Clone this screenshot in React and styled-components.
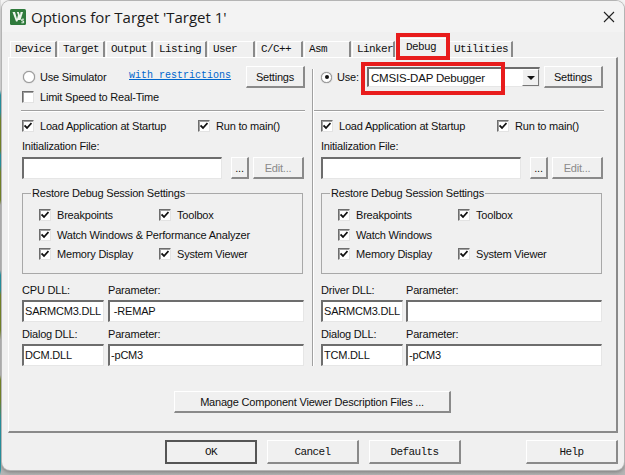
import styled, { createGlobalStyle } from 'styled-components';

const GlobalStyle = createGlobalStyle`
  html, body {
    margin: 0;
    padding: 0;
    overflow: hidden;
  }
  body {
    font-family: "Liberation Sans", Arial, sans-serif;
  }
`

const Page = styled.div`
  width: 625px;
  height: 475px;
  box-sizing: border-box;
  padding: 1px 1px 5px 2px;
  background:
    linear-gradient(to bottom,
      #ddd 0, #ddd 90px, #2a9aa8 95px, #2a9aa8 112px, #7c8c2c 120px, #7c8c2c 150px,
      #2a9aa8 155px, #2a9aa8 165px, #7c8c2c 172px, #7c8c2c 200px, #bbb 205px, #bbb 270px,
      #2a9aa8 275px, #2a9aa8 290px, #7c8c2c 295px, #7c8c2c 330px, #bbb 340px, #bbb 375px,
      #7c8c2c 380px, #7c8c2c 400px, #2a9aa8 420px, #2a9aa8 470px, #bbb 475px) left top / 1px 100% no-repeat,
    linear-gradient(to bottom, #f4f4f4 0, #e6e6e6 300px, #b5b5b5 100%);
`

const Window = styled.div`
  width: 622px;
  height: 469px;
  display: flex;
  flex-direction: column;
  background: #f0f0f0;
  border-radius: 8px;
  box-shadow: 0 0 0 1px #b4b4b4, 0 2px 4px rgba(0, 0, 0, 0.35);
  overflow: hidden;
`

const TitleBar = styled.div`
  height: 31px;
  flex: none;
  display: flex;
  align-items: center;
  padding: 0 9px 0 8px;
  background: #f3f3f3;
`

const AppIcon = styled.svg`
  width: 16px;
  height: 16px;
  flex: none;
`

const Title = styled.div`
  margin-left: 5px;
  flex: 1;
  font-family: "Open Sans", "Noto Sans", sans-serif;
  font-size: 15px;
  color: #1a1a1a;
  white-space: nowrap;
`

const Content = styled.div`
  flex: 1;
  display: flex;
  flex-direction: column;
  padding: 9px 6px 0;
`

const TabRow = styled.div`
  height: 16px;
  flex: none;
  display: flex;
  gap: 1px;
  margin-left: 2px;
  position: relative;
  z-index: 2;
`

const Tab = styled.div`
  position: relative;
  box-sizing: border-box;
  width: ${props => props.$w}px;
  height: ${props => (props.$active ? 20 : 16)}px;
  margin-top: ${props => (props.$active ? -3 : 0)}px;
  padding: ${props => (props.$active ? '2px 0 0 9px' : '1px 0 0 4px')};
  background: #f0f0f0;
  border-top: 1px solid #fff;
  border-left: 1px solid #fff;
  border-right: 2px solid #8a8a8a;
  font-family: "Liberation Mono", monospace;
  font-size: 11px;
  letter-spacing: -0.6px;
  line-height: 13px;
  color: #111;
  white-space: pre;
`

const RedBox = styled.div`
  position: absolute;
  box-sizing: border-box;
  left: ${props => props.$left}px;
  top: ${props => props.$top}px;
  width: ${props => props.$w}px;
  height: ${props => props.$h}px;
  border: 4px solid #e81c1c;
  pointer-events: none;
  z-index: 3;
`

const Panel = styled.div`
  box-sizing: border-box;
  width: 610px;
  height: 376px;
  flex: none;
  padding-top: 8px;
  border-top: 1px solid #fff;
  border-left: 1px solid #fff;
  border-right: 2px solid #8a8a8a;
  border-bottom: 2px solid #8a8a8a;
  display: flex;
  flex-direction: column;
`

const Panes = styled.div`
  display: grid;
  grid-template-columns: 303px 2px 1fr;
  height: 300px;
  flex: none;
`

const Pane = styled.div`
  display: flex;
  flex-direction: column;
  padding: ${props => (props.$right ? '0 0 0 7px' : '0 7px 0 13px')};
  font-size: 11px;
  letter-spacing: -0.2px;
  color: #111;
`

const Divider = styled.div`
  margin-top: 3px;
  border-left: 1px solid #a0a0a0;
  border-right: 1px solid #fff;
`

const TopRow = styled.div`
  height: 22px;
  display: flex;
  align-items: center;
  width: ${props => (props.$right ? 282 : 283)}px;
`

const Option = styled.label`
  display: flex;
  align-items: center;
  height: 14px;
  flex: none;
  width: ${props => (props.$w ? `${props.$w}px` : 'auto')};
  margin-top: ${props => props.$mt || 0}px;
  white-space: nowrap;
`

const RadioDot = styled.span`
  box-sizing: border-box;
  width: ${props => (props.$on ? 11 : 12)}px;
  height: ${props => (props.$on ? 11 : 12)}px;
  flex: none;
  margin: ${props => (props.$on ? '0 5px 0 0' : '0 5px 0 1px')};
  border-radius: 50%;
  border: 1px solid #9a9a9a;
  background: #fff;
  box-shadow: inset 0 0 0 1px #fff, 0 0 1px #777;
  display: flex;
  align-items: center;
  justify-content: center;
  &::after {
    content: '';
    width: 4px;
    height: 4px;
    border-radius: 50%;
    background: ${props => (props.$on ? '#111' : 'transparent')};
  }
`

const Box = styled.span`
  box-sizing: border-box;
  width: 12px;
  height: 12px;
  flex: none;
  margin-right: 6px;
  background: #fff;
  border-top: 1px solid #6d6d6d;
  border-left: 1px solid #6d6d6d;
  border-right: 1px solid #e3e3e3;
  border-bottom: 1px solid #e3e3e3;
  box-shadow: inset 1px 1px 0 #a0a0a0;
  display: flex;
  align-items: center;
  justify-content: center;
`

const LinkText = styled.a`
  flex: none;
  width: 117px;
  font-family: "Liberation Mono", monospace;
  font-size: 10px;
  letter-spacing: 0;
  color: #0066cc;
  text-decoration: underline;
  margin-top: -3px;
`

const Button = styled.button`
  box-sizing: border-box;
  flex: none;
  width: ${props => props.$w}px;
  height: ${props => props.$h || 22}px;
  padding: 0;
  margin-left: ${props => props.$ml || 0}px;
  background: #f0f0f0;
  border-top: 1px solid #fff;
  border-left: 1px solid #fff;
  border-right: 2px solid #8a8a8a;
  border-bottom: 2px solid #8a8a8a;
  font-family: "Liberation Sans", Arial, sans-serif;
  font-size: 11px;
  letter-spacing: -0.2px;
  color: ${props => (props.disabled ? '#8a8a8a' : '#111')};
`

const Separator = styled.div`
  height: 2px;
  margin-top: 6px;
  width: ${props => (props.$right ? 290 : 284)}px;
  margin-left: ${props => (props.$right ? -7 : -1)}px;
  background: linear-gradient(to bottom, #a0a0a0 50%, #fff 50%);
`

const CheckRow = styled.div`
  display: flex;
  margin-top: 7px;
`

const FieldLabel = styled.div`
  height: 14px;
  line-height: 14px;
  margin-top: ${props => props.$mt}px;
  white-space: nowrap;
`

const FileRow = styled.div`
  display: flex;
  height: 22px;
  margin-top: 4px;
`

const sunken = `
  box-sizing: border-box;
  background: #fff;
  border-top: 2px solid #6d6d6d;
  border-left: 2px solid #6d6d6d;
  border-right: 1px solid #e6e6e6;
  border-bottom: 1px solid #e6e6e6;
`

const TextInput = styled.input`
  ${sunken}
  width: ${props => (props.$w ? `${props.$w}px` : '100%')};
  height: 22px;
  min-width: 0;
  padding: 0 0 2px 1px;
  outline: none;
  flex: none;
  font-family: "Liberation Sans", Arial, sans-serif;
  font-size: 11px;
  letter-spacing: -0.2px;
  color: #111;
`

const Group = styled.fieldset`
  box-sizing: border-box;
  width: 281px;
  height: 88px;
  margin: 7px 0 0;
  padding: 8px 0 0 16px;
  border: 1px solid #a8a8a8;
  display: block;
`

const GroupTitle = styled.legend`
  margin-left: -8px;
  padding: 0 1px;
  height: 14px;
  line-height: 14px;
  font-size: 11px;
`

const GroupGrid = styled.div`
  display: grid;
  grid-template-columns: 120px auto;
  row-gap: 5.5px;
`

const Wide = styled.div`
  grid-column: 1 / 3;
`

const DllGrid = styled.div`
  display: grid;
  grid-template-columns: 82px 196px;
  column-gap: ${props => props.$gap}px;
  margin-top: ${props => props.$mt}px;
`

const DllCell = styled.div`
  display: flex;
  flex-direction: column;
  gap: 3px;
`

const Combo = styled.div`
  ${sunken}
  position: relative;
  width: 173px;
  height: 20px;
  flex: none;
  display: flex;
  align-items: center;
  justify-content: space-between;
  padding-left: 2px;
  margin-right: 4px;
  font-size: 11.5px;
  letter-spacing: -0.2px;
`

const ComboArrow = styled.span`
  box-sizing: border-box;
  width: 17px;
  height: 17px;
  background: #f0f0f0;
  border-top: 1px solid #fff;
  border-left: 1px solid #fff;
  border-right: 1px solid #777;
  border-bottom: 1px solid #777;
  display: flex;
  align-items: center;
  justify-content: center;
  &::after {
    content: '';
    border-left: 4px solid transparent;
    border-right: 4px solid transparent;
    border-top: 4px solid #111;
  }
`

const ManageRow = styled.div`
  margin: 25px 0 0 165px;
`

const Footer = styled.div`
  display: flex;
  gap: 10px;
  margin: 7px 0 0 157px;
  width: 453px;
`

const FooterButton = styled(Button)`
  width: 92px;
  height: 24px;
  font-family: "Liberation Mono", monospace;
  font-size: 11px;
  letter-spacing: -0.6px;
  border: ${props => (props.$primary ? '2px solid #555' : '')};
  border-right: 2px solid ${props => (props.$primary ? '#555' : '#8a8a8a')};
  border-bottom: 2px solid ${props => (props.$primary ? '#555' : '#8a8a8a')};
  margin-left: ${props => (props.$push ? 'auto' : '0')};
`

const tabs = [
  { label: 'Device', w: 47 },
  { label: 'Target', w: 47 },
  { label: 'Output', w: 47 },
  { label: 'Listing', w: 53 },
  { label: 'User', w: 47 },
  { label: 'C/C++', w: 47 },
  { label: 'Asm', w: 47 },
  { label: 'Linker', w: 43 },
  { label: 'Debug', w: 52, active: true },
  { label: 'Utilities', w: 64 },
]

function Tick() {
  return (
    <svg width="8" height="8" viewBox="0 0 8 8">
      <path d="M0.5 3.5 L3 6 L7.5 1" fill="none" stroke="#111" strokeWidth="1.8" />
    </svg>
  )
}

function Check({ label, checked = true, w, mt }) {
  return (
    <Option $w={w} $mt={mt}>
      <Box>{checked && <Tick />}</Box>
      {label}
    </Option>
  )
}

function SessionGroup({ watchLabel }) {
  return (
    <Group>
      <GroupTitle>Restore Debug Session Settings</GroupTitle>
      <GroupGrid>
        <Check label="Breakpoints" />
        <Check label="Toolbox" />
        <Wide><Check label={watchLabel} /></Wide>
        <Check label="Memory Display" />
        <Check label="System Viewer" />
      </GroupGrid>
    </Group>
  )
}

function DllBlock({ title, dll, param, gap, mt }) {
  return (
    <DllGrid $gap={gap} $mt={mt}>
      <DllCell>
        <FieldLabel $mt={0}>{title}</FieldLabel>
        <TextInput defaultValue={dll} readOnly />
      </DllCell>
      <DllCell>
        <FieldLabel $mt={0}>Parameter:</FieldLabel>
        <TextInput defaultValue={param} readOnly />
      </DllCell>
    </DllGrid>
  )
}

function CommonFields({ watchLabel, firstDll, firstParam, secondDll, title, gap, right }) {
  return (
    <>
      <Separator $right={right} />
      <CheckRow>
        <Check label="Load Application at Startup" w={176} />
        <Check label="Run to main()" />
      </CheckRow>
      <FieldLabel $mt={6}>Initialization File:</FieldLabel>
      <FileRow>
        <TextInput $w={200} readOnly />
        <Button $w={18} $ml={9}>...</Button>
        <Button $w={51} $ml={4} disabled>Edit...</Button>
      </FileRow>
      <SessionGroup watchLabel={watchLabel} />
      <DllBlock title={title} dll={firstDll} param={firstParam} gap={gap} mt={9} />
      <DllBlock title="Dialog DLL:" dll={secondDll} param="-pCM3" gap={gap} mt={5} />
    </>
  )
}

function App() {
  return (
    <Page>
      <GlobalStyle />
      <Window>
        <TitleBar>
          <AppIcon viewBox="0 0 16 16">
            <rect x="0" y="0" width="16" height="16" rx="1.5" fill="#2f7a3c" />
            <path d="M2.5 3 H5 L7 10 L8 6 L6.8 3 H8.8 L10 6.5 L10.6 3 H13 L10.5 11 H8 L7.4 12.5 H6 Z" fill="#eef5ee" />
            <path d="M14 10.2 H11.8 V12 H13.6 V13.8 H11.4" fill="none" stroke="#eef5ee" strokeWidth="1" />
          </AppIcon>
          <Title>Options for Target 'Target 1'</Title>
          <svg width="12" height="12" viewBox="0 0 12 12">
            <path d="M1 1 L11 11 M11 1 L1 11" stroke="#222" strokeWidth="1.1" fill="none" />
          </svg>
        </TitleBar>
        <Content>
          <TabRow>
            {tabs.map(tab => (
              <Tab key={tab.label} $w={tab.w} $active={tab.active}>
                {tab.label}
                {tab.active && <RedBox $left={-1} $top={-6} $w={54} $h={27} />}
              </Tab>
            ))}
          </TabRow>
          <Panel>
            <Panes>
              <Pane>
                <TopRow>
                  <Option $w={107}><RadioDot />Use Simulator</Option>
                  <LinkText>with restrictions</LinkText>
                  <Button $w={59}>Settings</Button>
                </TopRow>
                <Check label="Limit Speed to Real-Time" checked={false} mt={2} />
                <CommonFields
                  watchLabel="Watch Windows & Performance Analyzer"
                  title="CPU DLL:"
                  firstDll="SARMCM3.DLL"
                  firstParam=" -REMAP"
                  secondDll="DCM.DLL"
                  gap={4}
                />
              </Pane>
              <Divider />
              <Pane $right>
                <TopRow $right>
                  <Option $w={46}><RadioDot $on />Use:</Option>
                  <Combo>
                    CMSIS-DAP Debugger
                    <ComboArrow />
                    <RedBox $left={-8} $top={-7} $w={144} $h={33} />
                  </Combo>
                  <Button $w={59}>Settings</Button>
                </TopRow>
                <Option $mt={2} />
                <CommonFields
                  watchLabel="Watch Windows"
                  title="Driver DLL:"
                  firstDll="SARMCM3.DLL"
                  firstParam=""
                  secondDll="TCM.DLL"
                  gap={3}
                  right
                />
              </Pane>
            </Panes>
            <ManageRow>
              <Button $w={277}>Manage Component Viewer Description Files ...</Button>
            </ManageRow>
          </Panel>
          <Footer>
            <FooterButton $primary>OK</FooterButton>
            <FooterButton>Cancel</FooterButton>
            <FooterButton>Defaults</FooterButton>
            <FooterButton $push>Help</FooterButton>
          </Footer>
        </Content>
      </Window>
    </Page>
  )
}

export default App;
